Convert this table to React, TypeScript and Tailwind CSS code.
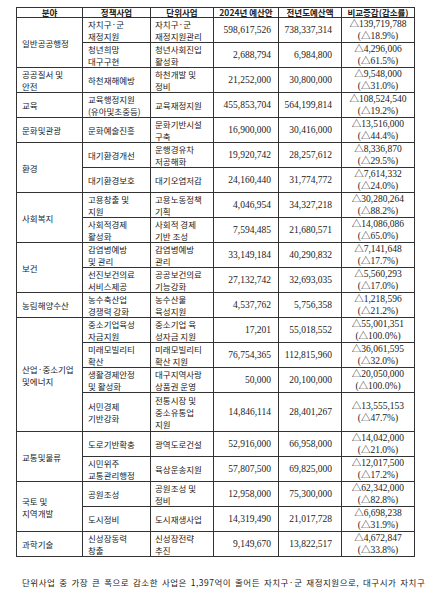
import React from 'react';

type Row = {
    area?: string[];
    span?: number;
    policy: string[];
    unit: string[];
    budget: string;
    prev: string;
    diff: string;
    rate: string;
    tall?: boolean;
};

const rows: Row[] = [
    { area: ['일반공공행정'], span: 2, policy: ['자치구·군', '재정지원'], unit: ['자치구·군', '재정지원관리'], budget: '598,617,526', prev: '738,337,314', diff: '△139,719,788', rate: '(△18.9%)' },
    { policy: ['청년희망', '대구구현'], unit: ['청년사회진입', '활성화'], budget: '2,688,794', prev: '6,984,800', diff: '△4,296,006', rate: '(△61.5%)' },
    { area: ['공공질서 및', '안전'], span: 1, policy: ['하천재해예방'], unit: ['하천개발 및', '정비'], budget: '21,252,000', prev: '30,800,000', diff: '△9,548,000', rate: '(△31.0%)' },
    { area: ['교육'], span: 1, policy: ['교육행정지원', '(유아및초중등)'], unit: ['교육재정지원'], budget: '455,853,704', prev: '564,199,814', diff: '△108,524,540', rate: '(△19.2%)' },
    { area: ['문화및관광'], span: 1, policy: ['문화예술진흥'], unit: ['문화기반시설', '구축'], budget: '16,900,000', prev: '30,416,000', diff: '△13,516,000', rate: '(△44.4%)' },
    { area: ['환경'], span: 2, policy: ['대기환경개선'], unit: ['운행경유차', '저공해화'], budget: '19,920,742', prev: '28,257,612', diff: '△8,336,870', rate: '(△29.5%)' },
    { policy: ['대기환경보호'], unit: ['대기오염저감'], budget: '24,160,440', prev: '31,774,772', diff: '△7,614,332', rate: '(△24.0%)' },
    { area: ['사회복지'], span: 2, policy: ['고용창출 및', '지원'], unit: ['고용노동정책', '기획'], budget: '4,046,954', prev: '34,327,218', diff: '△30,280,264', rate: '(△88.2%)' },
    { policy: ['사회적경제', '활성화'], unit: ['사회적 경제', '기반 조성'], budget: '7,594,485', prev: '21,680,571', diff: '△14,086,086', rate: '(△65.0%)' },
    { area: ['보건'], span: 2, policy: ['감염병예방', '및 관리'], unit: ['감염병예방', '관리'], budget: '33,149,184', prev: '40,290,832', diff: '△7,141,648', rate: '(△17.7%)' },
    { policy: ['선진보건의료', '서비스제공'], unit: ['공공보건의료', '기능강화'], budget: '27,132,742', prev: '32,693,035', diff: '△5,560,293', rate: '(△17.0%)' },
    { area: ['농림해양수산'], span: 1, policy: ['농수축산업', '경쟁력 강화'], unit: ['농수산물', '육성지원'], budget: '4,537,762', prev: '5,756,358', diff: '△1,218,596', rate: '(△21.2%)' },
    { area: ['산업·중소기업', '및에너지'], span: 4, policy: ['중소기업육성', '자금지원'], unit: ['중소기업 육', '성자금 지원'], budget: '17,201', prev: '55,018,552', diff: '△55,001,351', rate: '(△100.0%)' },
    { policy: ['미래모빌리티', '확산'], unit: ['미래모빌리티', '확산 지원'], budget: '76,754,365', prev: '112,815,960', diff: '△36,061,595', rate: '(△32.0%)' },
    { policy: ['생활경제안정', '및 활성화'], unit: ['대구지역사랑', '상품권 운영'], budget: '50,000', prev: '20,100,000', diff: '△20,050,000', rate: '(△100.0%)' },
    { policy: ['서민경제', '기반강화'], unit: ['전통시장 및', '중소유통업', '지원'], budget: '14,846,114', prev: '28,401,267', diff: '△13,555,153', rate: '(△47.7%)', tall: true },
    { area: ['교통및물류'], span: 2, policy: ['도로기반확충'], unit: ['광역도로건설'], budget: '52,916,000', prev: '66,958,000', diff: '△14,042,000', rate: '(△21.0%)' },
    { policy: ['시민위주', '교통관리행정'], unit: ['육상운송지원'], budget: '57,807,500', prev: '69,825,000', diff: '△12,017,500', rate: '(△17.2%)' },
    { area: ['국토 및', '지역개발'], span: 2, policy: ['공원조성'], unit: ['공원조성 및', '정비'], budget: '12,958,000', prev: '75,300,000', diff: '△62,342,000', rate: '(△82.8%)' },
    { policy: ['도시정비'], unit: ['도시재생사업'], budget: '14,319,490', prev: '21,017,728', diff: '△6,698,238', rate: '(△31.9%)' },
    { area: ['과학기술'], span: 1, policy: ['신성장동력', '창출'], unit: ['신성장전략', '추진'], budget: '9,149,670', prev: '13,822,517', diff: '△4,672,847', rate: '(△33.8%)' },
];

const Lines: React.FC<{ lines: string[] }> = ({ lines }) => (
    <>
        {lines.map((l, i) => (
            <div key={i}>{l}</div>
        ))}
    </>
);

const App: React.FC = () => {
    const td = 'border border-[#333] align-middle p-0 whitespace-nowrap overflow-hidden';
    const kr = "text-[8.5px] leading-[12px] font-['Noto_Sans_CJK_KR',sans-serif] text-left";
    const num = "text-[9.5px] leading-[12px] font-['Liberation_Serif','Noto_Sans_CJK_KR',serif] text-right";

    return (
        <div className="w-[443px] h-[604px] bg-white text-[#222] overflow-hidden">
            <table className="ml-[16px] mt-[7px] w-[398px] table-fixed border-collapse">
                <colgroup>
                    <col className="w-[66px]" />
                    <col className="w-[68px]" />
                    <col className="w-[63px]" />
                    <col className="w-[65px]" />
                    <col className="w-[63px]" />
                    <col className="w-[73px]" />
                </colgroup>
                <thead>
                    <tr className="h-[10px] font-['Noto_Sans_CJK_KR',sans-serif] text-[8.5px] leading-[9px] font-bold">
                        <th className={`${td} text-center`}>분야</th>
                        <th className={`${td} text-center`}>정책사업</th>
                        <th className={`${td} text-center`}>단위사업</th>
                        <th className={`${td} text-center`}>2024년 예산안</th>
                        <th className={`${td} text-center`}>전년도예산액</th>
                        <th className={`${td} text-center`}>비교증감(감소률)</th>
                    </tr>
                </thead>
                <tbody>
                    {rows.map((r, i) => (
                        <tr key={i} className={r.tall ? 'h-[39px]' : 'h-[25px]'}>
                            {r.area && (
                                <td rowSpan={r.span} className={`${td} ${kr} pl-[5px]`}>
                                    <Lines lines={r.area} />
                                </td>
                            )}
                            <td className={`${td} ${kr} pl-[5px]`}>
                                <Lines lines={r.policy} />
                            </td>
                            <td className={`${td} ${kr} pl-[4px]`}>
                                <Lines lines={r.unit} />
                            </td>
                            <td className={`${td} ${num} pr-[7px]`}>{r.budget}</td>
                            <td className={`${td} ${num} pr-[9px]`}>{r.prev}</td>
                            <td className={`${td} text-[9.5px] leading-[12px] font-['Liberation_Serif','Noto_Sans_CJK_KR',serif] text-center`}>
                                <div>{r.diff}</div>
                                <div>{r.rate}</div>
                            </td>
                        </tr>
                    ))}
                </tbody>
            </table>
            <p className="mt-[19px] pl-[22px] whitespace-nowrap text-[8.5px] leading-[12px] tracking-[0.5px] [word-spacing:1.5px] font-['Noto_Sans_CJK_KR',sans-serif]">
                단위사업 중 가장 큰 폭으로 감소한 사업은 1,397억이 줄어든 자치구·군 재정지원으로, 대구시가 자치구
            </p>
        </div>
    );
};

export default App;
